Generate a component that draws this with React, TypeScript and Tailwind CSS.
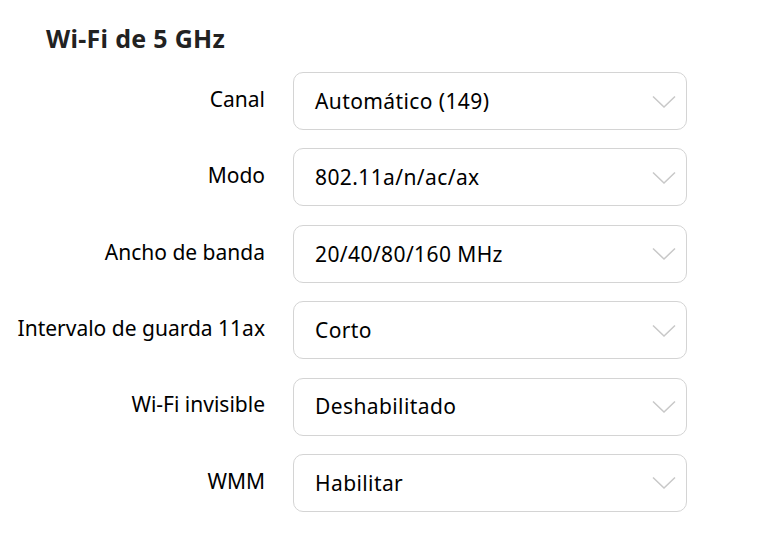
const rows = [
  { label: "Canal", value: "Automático (149)" },
  { label: "Modo", value: "802.11a/n/ac/ax" },
  { label: "Ancho de banda", value: "20/40/80/160 MHz" },
  { label: "Intervalo de guarda 11ax", value: "Corto" },
  { label: "Wi-Fi invisible", value: "Deshabilitado" },
  { label: "WMM", value: "Habilitar" },
];

const Chevron = () => (
  <svg width="24" height="14" viewBox="0 0 24 14" fill="none" stroke="#c8c8c8" strokeWidth={1.5}>
    <path d="M1 1.5l11 10.5 11-10.5" />
  </svg>
);

export default function App() {
  return (
    <div
      className="w-[777px] h-[557px] bg-white text-black"
      style={{ fontFamily: '"Noto Sans", "Open Sans", sans-serif' }}
    >
      <h1 className="pl-[46px] pt-[22px] text-[25px] leading-[32px] font-bold tracking-[0.3px] text-[#222]">
        Wi-Fi de 5 GHz
      </h1>
      <div className="mt-[18px] grid grid-cols-[265px_394px] gap-x-[28px] gap-y-[18.4px]">
        {rows.map((r) => (
          <div key={r.label} className="contents">
            <div className="flex h-[58px] items-center justify-end pb-[3px] text-[21px] whitespace-nowrap">
              {r.label}
            </div>
            <div className="flex h-[58px] items-center justify-between rounded-[10px] border border-[#d4d4d4] pl-[21px] pr-[10px] pt-[1px] text-[21px] tracking-[0.4px]">
              <span>{r.value}</span>
              <Chevron />
            </div>
          </div>
        ))}
      </div>
    </div>
  );
}
